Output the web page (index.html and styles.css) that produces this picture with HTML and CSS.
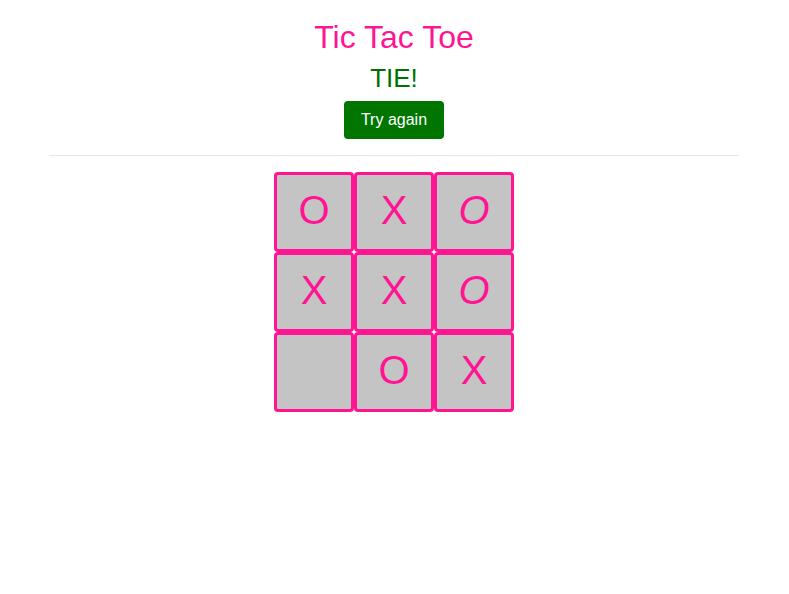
FILE: index.html
```html
<!DOCTYPE html>
<html>
<head>
<meta charset="utf-8">
<title>Tic Tac Toe</title>
<link rel="stylesheet" href="styles.css">
</head>
<body>
<div class="app">
  <h1 class="title">Tic Tac Toe</h1>
  <h2 class="status">TIE!</h2>
  <button class="again">Try again</button>
  <hr class="divider">
  <div class="board">
    <div class="cell">O</div>
    <div class="cell">X</div>
    <div class="cell italic">O</div>
    <div class="cell">X</div>
    <div class="cell">X</div>
    <div class="cell italic">O</div>
    <div class="cell"></div>
    <div class="cell">O</div>
    <div class="cell">X</div>
  </div>
</div>
</body>
</html>
```
FILE: styles.css
```css
html, body {
  margin: 0;
  padding: 0;
  background: #ffffff;
}
body {
  font-family: "Liberation Sans", Arial, sans-serif;
}
.app {
  display: flex;
  flex-direction: column;
  align-items: center;
  padding-right: 1px;
}
.title {
  margin: 19px 0 0;
  font-size: 32px;
  line-height: 36px;
  font-weight: normal;
  color: #ff1493;
}
.status {
  margin: 8px 0 0;
  font-size: 26px;
  line-height: 30px;
  font-weight: normal;
  color: #007000;
}
.again {
  margin-top: 8px;
  width: 100px;
  height: 38px;
  padding: 0;
  border: 0;
  border-radius: 4px;
  background: #007600;
  color: #ffffff;
  font-family: "Liberation Sans", Arial, sans-serif;
  font-size: 16px;
  line-height: 18px;
}
.divider {
  align-self: stretch;
  margin: 16px 49px 0 49px;
  border: 0;
  border-top: 1px solid #e6e6e6;
  height: 0;
}
.board {
  margin-top: 16px;
  display: grid;
  grid-template-columns: repeat(3, 80px);
  grid-template-rows: repeat(3, 80px);
}
.cell {
  box-sizing: border-box;
  border: 3px solid #ff1493;
  border-radius: 4px;
  background: #c4c4c4;
  color: #ff1493;
  font-size: 40px;
  display: flex;
  align-items: center;
  justify-content: center;
  line-height: 1;
  padding-bottom: 4px;
}
.italic {
  font-style: italic;
}
```
